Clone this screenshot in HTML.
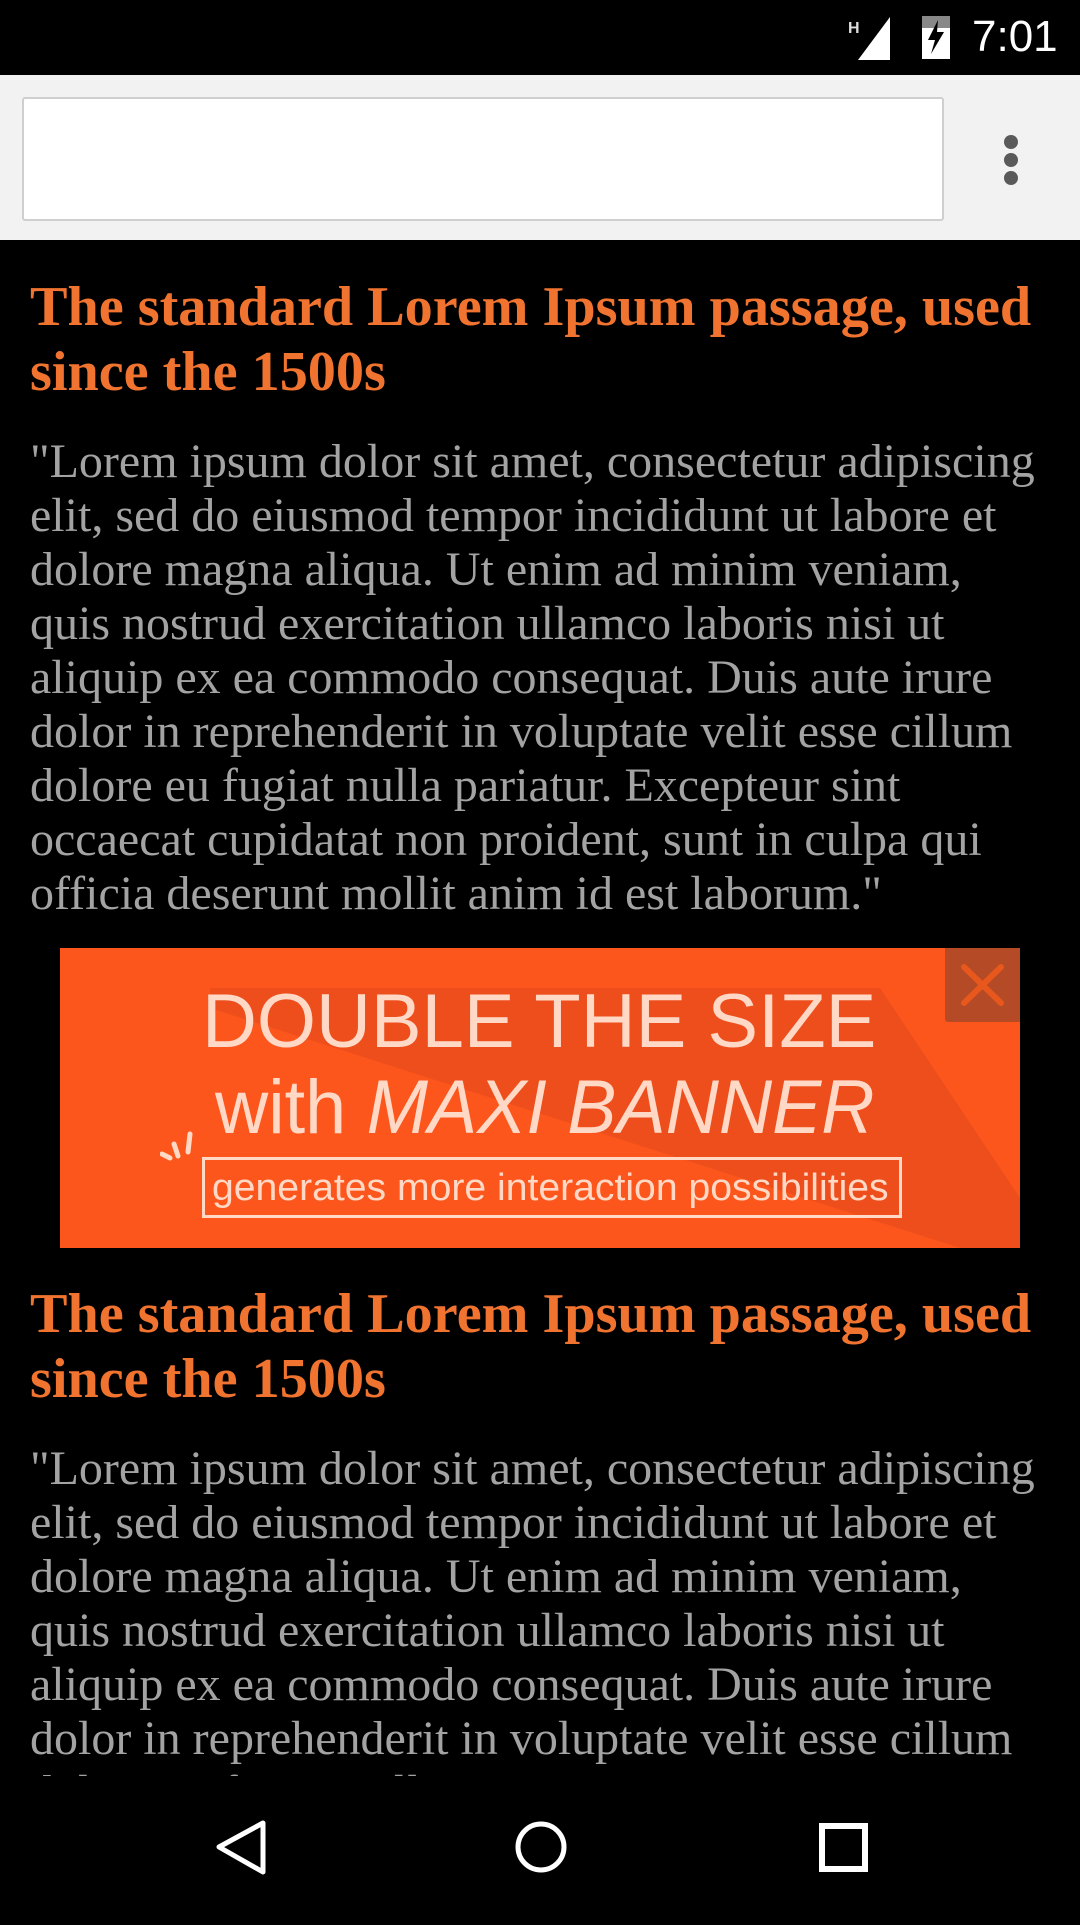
<!DOCTYPE html>
<html><head><meta charset="utf-8"><style>
*{margin:0;padding:0;box-sizing:border-box}
body{width:1080px;height:1920px;background:#000;position:relative;overflow:hidden;font-family:"Liberation Serif",serif}
.status{position:absolute;top:0;left:0;width:1080px;height:75px;background:#000}
.time{position:absolute;left:972px;top:12px;color:#fff;font:44px "Liberation Sans",sans-serif}
.toolbar{position:absolute;top:75px;left:0;width:1080px;height:165px;background:#f2f2f2}
.input{position:absolute;left:22px;top:22px;width:922px;height:124px;background:#fff;border:2px solid #cfcfcf;border-radius:3px}
.dot{position:absolute;left:1004px;width:14px;height:14px;border-radius:50%;background:#5a5a5a}
.content{position:absolute;top:240px;left:0;width:1080px;height:1536px;overflow:hidden}
h2{position:absolute;left:30px;font:bold 56.2px/65px "Liberation Serif",serif;color:#f07430;white-space:nowrap}
p{position:absolute;left:30px;font:48px/54px "Liberation Serif",serif;color:#a3a3a3;white-space:nowrap}
.banner{position:absolute;left:60px;top:708px;width:960px;height:300px;background:#fd561c;overflow:hidden}
.shadow{position:absolute;left:0;top:0;width:960px;height:300px}
.bt{position:absolute;color:#ffd8c6;font-family:"Liberation Sans",sans-serif;white-space:nowrap;transform-origin:0 0}
.close{position:absolute;right:0;top:0;width:75px;height:74px;background:#b54a27;border-radius:0 0 0 3px}
.nav{position:absolute;top:1776px;left:0;width:1080px;height:144px;background:#000}
</style></head><body>
<div class="status">
<svg style="position:absolute;left:848px;top:15px" width="60" height="46" viewBox="0 0 60 46">
<text x="0" y="18" font-family="Liberation Sans" font-size="16" font-weight="bold" fill="#ddd">H</text>
<polygon points="10,45 42,45 42,2" fill="#fff"/>
</svg>
<svg style="position:absolute;left:920px;top:14px" width="32" height="46" viewBox="0 0 32 46">
<rect x="2" y="2" width="28" height="43" fill="#fff"/>
<rect x="2" y="2" width="28" height="12" fill="#888"/>
<polygon points="18,6 8,26 15,26 11,40 24,18 17,18" fill="#000"/>
</svg>
<div class="time">7:01</div>
</div>
<div class="toolbar">
<div class="input"></div>
<div class="dot" style="top:60px"></div>
<div class="dot" style="top:78px"></div>
<div class="dot" style="top:96px"></div>
</div>
<div class="content">
<h2 style="top:35px">The standard Lorem Ipsum passage, used<br>since the 1500s</h2>
<p style="top:195px">"Lorem ipsum dolor sit amet, consectetur adipiscing<br>elit, sed do eiusmod tempor incididunt ut labore et<br>dolore magna aliqua. Ut enim ad minim veniam,<br>quis nostrud exercitation ullamco laboris nisi ut<br>aliquip ex ea commodo consequat. Duis aute irure<br>dolor in reprehenderit in voluptate velit esse cillum<br>dolore eu fugiat nulla pariatur. Excepteur sint<br>occaecat cupidatat non proident, sunt in culpa qui<br>officia deserunt mollit anim id est laborum."</p>
<div class="banner">
<svg class="shadow" viewBox="0 0 960 300"><polygon points="150,40 820,40 960,250 960,300 900,300 150,60" fill="#e34a1c" opacity="0.6"/></svg>
<div class="bt" style="left:142px;top:30px;font-size:76px">DOUBLE THE SIZE</div>
<div class="bt" style="left:155px;top:116px;font-size:76px;transform:scaleX(0.97)">with <i>MAXI BANNER</i></div>
<svg style="position:absolute;left:100px;top:180px" width="50" height="40" viewBox="0 0 50 40"><g stroke="#ffd8c6" stroke-width="5" stroke-linecap="round"><line x1="2" y1="26" x2="10" y2="30"/><line x1="14" y1="16" x2="18" y2="28"/><line x1="30" y1="6" x2="28" y2="24"/></g></svg>
<div style="position:absolute;left:142px;top:209px;width:700px;height:61px;border:3px solid #ffd8c6"></div>
<div class="bt" style="left:152px;top:219px;font-size:38px;transform:scaleX(1.03)">generates more interaction possibilities</div>
<div class="close"><svg width="75" height="74" viewBox="0 0 75 74"><g stroke="#e8581c" stroke-width="6" stroke-linecap="round"><line x1="19" y1="19" x2="56" y2="55"/><line x1="56" y1="19" x2="19" y2="55"/></g></svg></div>
</div>
<h2 style="top:1042px">The standard Lorem Ipsum passage, used<br>since the 1500s</h2>
<p style="top:1202px">"Lorem ipsum dolor sit amet, consectetur adipiscing<br>elit, sed do eiusmod tempor incididunt ut labore et<br>dolore magna aliqua. Ut enim ad minim veniam,<br>quis nostrud exercitation ullamco laboris nisi ut<br>aliquip ex ea commodo consequat. Duis aute irure<br>dolor in reprehenderit in voluptate velit esse cillum<br>dolore eu fugiat nulla pariatur. Excepteur sint</p>
</div>
<div class="nav">
<svg width="1080" height="144" viewBox="0 0 1080 144">
<polygon points="219,71 263,47 263,96" fill="none" stroke="#fff" stroke-width="5" stroke-linejoin="round"/>
<circle cx="541" cy="71" r="23" fill="none" stroke="#fff" stroke-width="5"/>
<rect x="822" y="50" width="43" height="43" fill="none" stroke="#fff" stroke-width="6"/>
</svg>
</div>
</body></html>
